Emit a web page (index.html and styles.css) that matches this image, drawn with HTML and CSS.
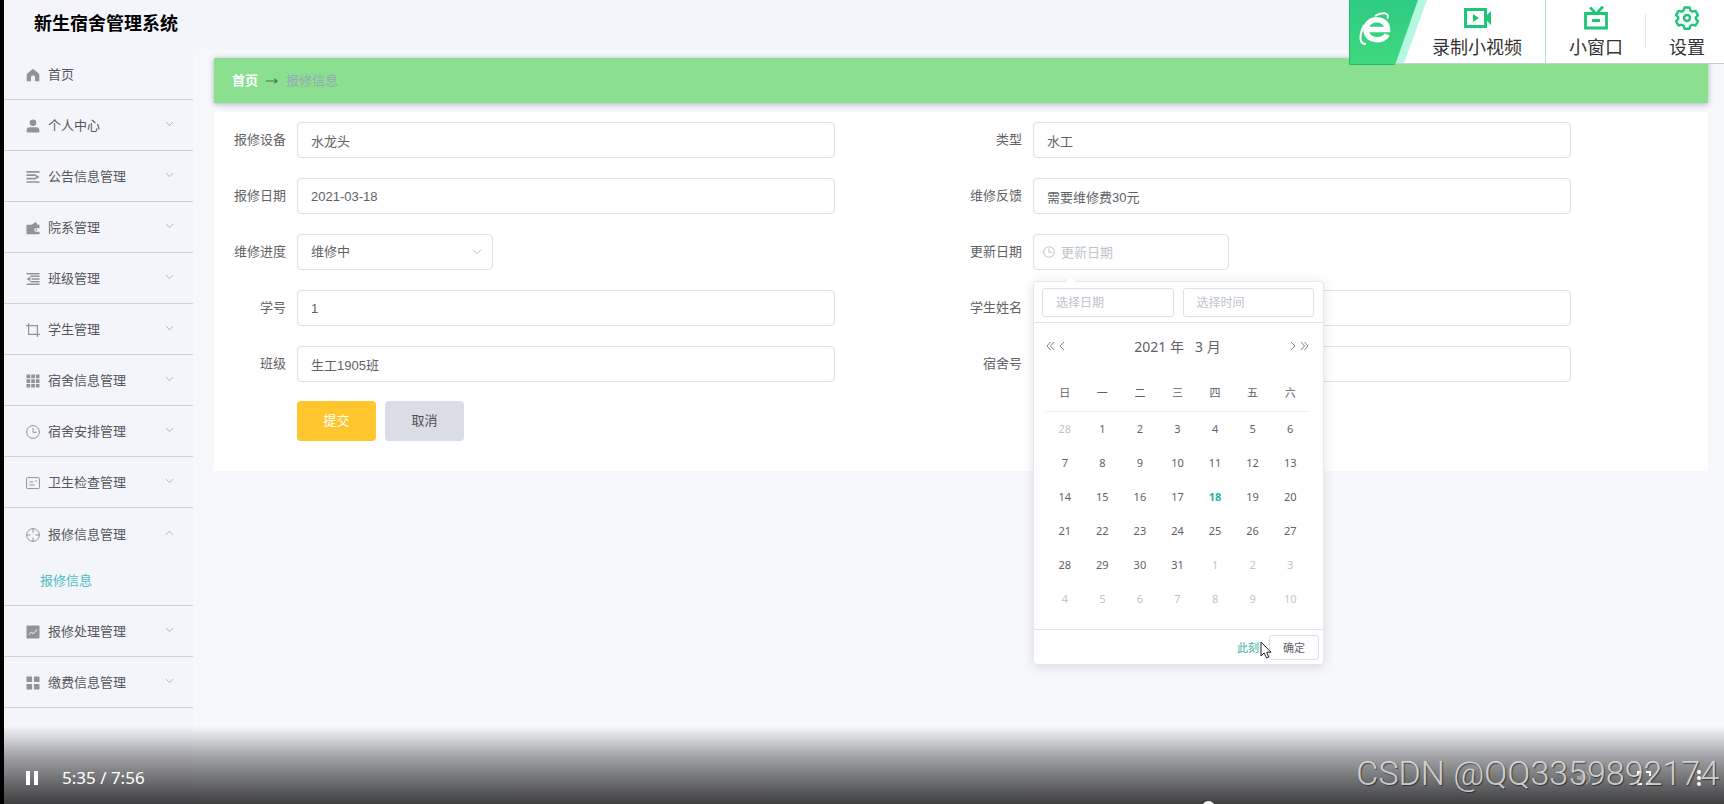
FILE: index.html
```html
<!DOCTYPE html>
<html lang="zh-CN">
<head>
<meta charset="utf-8">
<title>新生宿舍管理系统</title>
<link rel="stylesheet" href="styles.css">
</head>
<body>
<div class="page">
  <header class="header"><h1 class="brand">新生宿舍管理系统</h1></header>
  <div class="body">
    <nav class="sidebar">
      <a class="item" href="#"><svg class="icon" viewBox="0 0 14 14"><path fill="currentColor" d="M7 .8 13.3 6v7.2H9V9.5a2 2 0 0 0-4 0v3.7H.7V6z"/></svg><span class="name">首页</span></a>
      <a class="item" href="#"><svg class="icon" viewBox="0 0 14 14"><circle cx="7" cy="3.8" r="3.3" fill="currentColor"/><path fill="currentColor" d="M.7 13.6V11q0-2.8 3-2.8h6.6q3 0 3 2.8v2.6z"/></svg><span class="name">个人中心</span><svg class="chev" viewBox="0 0 10 6"><path d="m1 .8 4 4 4-4"/></svg></a>
      <a class="item" href="#"><svg class="icon" viewBox="0 0 14 14"><path stroke="currentColor" stroke-width="1.7" fill="none" d="M.5 1.800h13M.5 5.200h9M.5 8.600h9M.5 12h13"/><path fill="currentColor" d="m9.500 4.200 4 2.700-4 2.700z"/></svg><span class="name">公告信息管理</span><svg class="chev" viewBox="0 0 10 6"><path d="m1 .8 4 4 4-4"/></svg></a>
      <a class="item" href="#"><svg class="icon" viewBox="0 0 14 14"><path fill="currentColor" fill-rule="evenodd" d="M.5 3.800h5L9.800 1l1.700 2.800h2v3.400H10a1.700 1.700 0 0 0 0 3.600h3.500v2.400H.5zM10.200 8.300a.8.8 0 1 0 .1 0z"/></svg><span class="name">院系管理</span><svg class="chev" viewBox="0 0 10 6"><path d="m1 .8 4 4 4-4"/></svg></a>
      <a class="item" href="#"><svg class="icon" viewBox="0 0 14 14"><path stroke="currentColor" stroke-width="1.600" fill="none" d="M.5 1.800h13M5.500 7h8M.5 12.200h13M4.500 4.300h9M4.500 9.700h9"/><path fill="currentColor" d="M4.300 4.400.6 7l3.700 2.600z"/></svg><span class="name">班级管理</span><svg class="chev" viewBox="0 0 10 6"><path d="m1 .8 4 4 4-4"/></svg></a>
      <a class="item" href="#"><svg class="icon" viewBox="0 0 14 14"><path stroke="currentColor" stroke-width="1.2" fill="none" d="M2.600 0v11.400H14M0 2.600h11.400V14"/></svg><span class="name">学生管理</span><svg class="chev" viewBox="0 0 10 6"><path d="m1 .8 4 4 4-4"/></svg></a>
      <a class="item" href="#"><svg class="icon" viewBox="0 0 14 14"><path fill="currentColor" d="M.5.5h3.700v3.700H.5zM5.200.5h3.700v3.700H5.200zM9.900.5h3.600v3.700H9.900zM.5 5.200h3.700v3.700H.5zM5.200 5.200h3.700v3.700H5.200zM9.900 5.200h3.600v3.700H9.900zM.5 9.900h3.700v3.600H.5zM5.200 9.900h3.700v3.600H5.200zM9.900 9.900h3.600v3.600H9.900z"/></svg><span class="name">宿舍信息管理</span><svg class="chev" viewBox="0 0 10 6"><path d="m1 .8 4 4 4-4"/></svg></a>
      <a class="item" href="#"><svg class="icon" viewBox="0 0 14 14"><g stroke="currentColor" fill="none"><circle cx="7" cy="7" r="6.4"/><path d="M7 3v4.300h3.600"/></g></svg><span class="name">宿舍安排管理</span><svg class="chev" viewBox="0 0 10 6"><path d="m1 .8 4 4 4-4"/></svg></a>
      <a class="item" href="#"><svg class="icon" viewBox="0 0 14 14"><g stroke="currentColor" fill="none"><rect x=".6" y="1.6" width="12.8" height="11" rx=".8"/><path d="M3.300 6h4M3.300 9h5.400M9.300 5h1.800"/></g></svg><span class="name">卫生检查管理</span><svg class="chev" viewBox="0 0 10 6"><path d="m1 .8 4 4 4-4"/></svg></a>
      <div class="group">
        <a class="item open" href="#"><svg class="icon" viewBox="0 0 14 14"><g stroke="currentColor" fill="none"><circle cx="7" cy="7" r="6.4"/><path d="M7 .6v4M7 9.400v4M.6 7h4M9.400 7h4"/></g></svg><span class="name">报修信息管理</span><svg class="chev" viewBox="0 0 10 6"><path d="m1 5 4-4 4 4"/></svg></a>
        <a class="sub" href="#">报修信息</a>
      </div>
      <a class="item" href="#"><svg class="icon" viewBox="0 0 14 14"><rect x=".5" y=".5" width="13" height="13" rx=".6" fill="currentColor"/><path stroke="#f4f5fb" fill="none" d="m3 9.500 2.200-2.400 2 1.600 4-4.300"/></svg><span class="name">报修处理管理</span><svg class="chev" viewBox="0 0 10 6"><path d="m1 .8 4 4 4-4"/></svg></a>
      <a class="item" href="#"><svg class="icon" viewBox="0 0 14 14"><g fill="currentColor"><rect x=".5" y=".5" width="5.6" height="5.6" rx=".6"/><rect x="7.9" y=".5" width="5.6" height="5.6" rx=".6"/><rect x=".5" y="7.9" width="5.6" height="5.6" rx=".6"/><rect x="7.9" y="7.9" width="5.6" height="5.6" rx=".6"/></g></svg><span class="name">缴费信息管理</span><svg class="chev" viewBox="0 0 10 6"><path d="m1 .8 4 4 4-4"/></svg></a>
    </nav>
    <main class="main">
      <div class="crumbs"><a class="home" href="#">首页</a><svg class="arrow" viewBox="0 0 12 8"><path d="M0 4h11M8.400 1.800 11 4 8.400 6.200"/></svg><span>报修信息</span></div>
      <form class="panel">
        <div class="fields">
          <div class="field"><label for="device">报修设备</label><div class="control"><input class="box" id="device" value="水龙头"></div></div>
          <div class="field"><label for="kind">类型</label><div class="control"><input class="box" id="kind" value="水工"></div></div>
          <div class="field"><label for="date">报修日期</label><div class="control"><input class="box" id="date" value="2021-03-18"></div></div>
          <div class="field"><label for="reply">维修反馈</label><div class="control"><input class="box" id="reply" value="需要维修费30元"></div></div>
          <div class="field"><label for="state">维修进度</label><div class="control"><div class="short"><select class="box" id="state"><option>维修中</option></select><svg class="caret" viewBox="0 0 10 6"><path d="m1 .8 4 4 4-4"/></svg></div></div></div>
          <div class="field"><label for="updated">更新日期</label><div class="control"><div class="short">
            <input class="box timed" id="updated" placeholder="更新日期"><svg class="clock" viewBox="0 0 14 14"><circle cx="7" cy="7" r="6.2"/><path d="M7 3v4.300h3.400"/></svg>
            <div class="picker">
              <div class="picker-head"><input class="mini" aria-label="选择日期" placeholder="选择日期"><input class="mini" aria-label="选择时间" placeholder="选择时间"></div>
              <div class="picker-body">
                <div class="month"><button type="button" aria-label="上一年"><svg class="nav2" viewBox="0 0 9 10"><path d="M4.500 1 1 5l3.500 4M8 1 4.500 5 8 9"/></svg></button><button type="button" aria-label="上个月"><svg class="nav1" viewBox="0 0 6 10"><path d="M5 1 1 5l4 4"/></svg></button><span class="title"><span>2021 年</span><span>3 月</span></span><button type="button" aria-label="下个月"><svg class="nav1" viewBox="0 0 6 10"><path d="m1 1 4 4-4 4"/></svg></button><button type="button" aria-label="下一年"><svg class="nav2" viewBox="0 0 9 10"><path d="M1 1l3.500 4L1 9M4.500 1 8 5 4.500 9"/></svg></button></div>
                <table class="days">
                  <thead><tr><th>日</th><th>一</th><th>二</th><th>三</th><th>四</th><th>五</th><th>六</th></tr></thead>
                  <tbody>
                  <tr><td class="off">28</td><td>1</td><td>2</td><td>3</td><td>4</td><td>5</td><td>6</td></tr>
                  <tr><td>7</td><td>8</td><td>9</td><td>10</td><td>11</td><td>12</td><td>13</td></tr>
                  <tr><td>14</td><td>15</td><td>16</td><td>17</td><td class="today">18</td><td>19</td><td>20</td></tr>
                  <tr><td>21</td><td>22</td><td>23</td><td>24</td><td>25</td><td>26</td><td>27</td></tr>
                  <tr><td>28</td><td>29</td><td>30</td><td>31</td><td class="off">1</td><td class="off">2</td><td class="off">3</td></tr>
                  <tr><td class="off">4</td><td class="off">5</td><td class="off">6</td><td class="off">7</td><td class="off">8</td><td class="off">9</td><td class="off">10</td></tr>
                  </tbody>
                </table>
              </div>
              <div class="picker-foot"><button class="now" type="button">此刻</button><button class="ok" type="button">确定</button>
                <svg class="cursor" viewBox="0 0 12 18"><path d="M1 1v14l3.200-3 2.300 5 2.300-1-2.200-4.800H11z"/></svg>
              </div>
            </div>
          </div></div></div>
          <div class="field"><label for="no">学号</label><div class="control"><input class="box" id="no" value="1"></div></div>
          <div class="field"><label for="student">学生姓名</label><div class="control"><input class="box" id="student"></div></div>
          <div class="field"><label for="class">班级</label><div class="control"><input class="box" id="class" value="生工1905班"></div></div>
          <div class="field"><label for="room">宿舍号</label><div class="control"><input class="box" id="room"></div></div>
        </div>
        <div class="actions"><button class="btn submit" type="button">提交</button><button class="btn cancel" type="button">取消</button></div>
      </form>
    </main>
  </div>
</div>

<div class="recorder">
  <svg class="badge" viewBox="0 0 80 65"><defs><linearGradient id="g" x1="0" y1="0" x2="0" y2="1"><stop offset="0" stop-color="#2dcb84"/><stop offset="1" stop-color="#3fd97e"/></linearGradient></defs><path fill="#fff" d="M60 0h20v63H46z"/><path fill="#b5f8e2" d="M69 0h9L55 63h-9z"/><path fill="url(#g)" d="M0 0h69L46 65H0z"/><path d="M.5 0v64.500H46" stroke="#20bd70" fill="none"/><path fill="none" stroke="#fff" stroke-width="5.500" d="M38 34.500c-3 7.500-20 7.500-21-4-.5-14 21-14.500 21.500-1H17"/><path fill="none" stroke="#fff" stroke-width="2" d="M26 16c6-4 15-4 12.500 2.500M15 25c-5 11-5 19 2 19"/></svg>
  <button class="tool wide"><svg class="tool-icon" viewBox="0 0 28 24"><path d="M2.500 3.500h20v17h-20z" fill="none" stroke="#1cc878" stroke-width="3"/><path d="m10 8 6 4-6 4zM24 9l4-4v14l-4-4z" fill="#1cc878"/></svg>录制小视频</button>
  <button class="tool mid"><svg class="tool-icon" viewBox="0 0 28 24"><path d="M3.500 7.500h21v14.500h-21zM10 14.500h8M8 1.500l5 5M21 .5l-5.500 6" fill="none" stroke="#1cc878" stroke-width="2.800"/></svg>小窗口</button>
  <button class="tool last"><svg class="tool-icon" viewBox="0 0 28 24"><path d="M11.500 1.500h5l.9 3 2 1.100 3.100-.7 2.500 4.300L22.800 11.400v1.600l2.200 2.200-2.500 4.300-3.100-.8-2 1.200-.9 2.800h-5l-.9-2.800-2-1.200-3.100.8L3 15.200 5.200 13v-1.600L3 9.200l2.500-4.300 3.100.7 2-1.100z" fill="none" stroke="#1cc878" stroke-width="2.400" stroke-linejoin="round"/><circle cx="14" cy="12" r="3" fill="none" stroke="#1cc878" stroke-width="2.400"/></svg>设置</button>
</div>

<div class="player">
  <button class="pause" aria-label="暂停"><svg viewBox="0 0 12 14"><path fill="#fff" d="M0 0h4v14H0zM8 0h4v14H8z"/></svg></button>
  <span class="time">5:35 / 7:56</span>
  <div class="right-controls">
    <svg class="mute" viewBox="0 0 14 14"><path fill="#fff" d="M0 5h3l4-4v12L3 9H0zM9 4q3 3 0 6zM9 0q9 7 0 14v-2q6-5 0-10z"/></svg>
    <svg class="full" viewBox="0 0 14 14"><path fill="none" stroke="#fff" stroke-width="2" d="M1 5V1h4M9 1h4v4M13 9v4H9M5 13H1V9"/></svg>
    <svg class="more" viewBox="0 0 4 16"><g fill="#fff"><circle cx="2" cy="2" r="2"/><circle cx="2" cy="8" r="2"/><circle cx="2" cy="14" r="2"/></g></svg>
  </div>
  <i class="thumb"></i>
</div>
<div class="watermark">CSDN @QQ3359892174</div>
</body>
</html>
```

FILE: styles.css
```css
* { box-sizing: border-box; }
body {
  margin: 0;
  height: 100vh;
  position: relative;
  overflow: hidden;
  background: #f4f5fb;
  color: #606266;
  font: 13px/20px "Liberation Sans", "Noto Sans CJK SC", sans-serif;
}
a { color: inherit; text-decoration: none; }
button, input, select { font: inherit; color: inherit; }
button { border: 0; padding: 0; background: none; }
svg { display: block; flex: none; }

.page { min-height: 100vh; display: flex; flex-direction: column; border-left: 4px solid #000; }
.header { height: 49px; padding: 9px 30px; }
.brand { margin: 0; font-size: 18px; line-height: 30px; color: #000; font-weight: 700; }
.body { flex: 1; display: flex; }

.sidebar { width: 189px; flex: none; }
.item { display: flex; align-items: center; gap: 8px; height: 51px; padding: 2px 19px 0 22px; border-bottom: 1px solid #cfd0d8; }
.item.open { border-bottom: 0; }
.group { border-bottom: 1px solid #cfd0d8; }
.icon { width: 14px; height: 14px; color: #909399; }
.name { flex: 1; color: #54575d; }
.chev { width: 9px; height: 6px; margin-bottom: 4px; fill: none; stroke: #a8abb2; }
.sub { display: block; height: 46px; padding: 12px 36px 0; color: #4bbfc0; }

.main { flex: 1; min-width: 0; padding: 9px 16px 0 21px; background: #f6f8fc; }
.crumbs { display: flex; align-items: center; gap: 8px; height: 45px; margin-bottom: 9px; padding: 0 18px; background: #8ae08f; color: #97a8be; box-shadow: 0 1px 6px rgba(0, 0, 0, .3); }
.home { color: #fff; font-weight: 700; }
.arrow { width: 12px; height: 8px; fill: none; stroke: #4f6f57; stroke-width: 1.2; }

.panel { background: #fff; padding: 10px 11px 30px; }
.fields { display: grid; grid-template-columns: 1fr 1fr; row-gap: 20px; }
.field { display: flex; align-items: center; }
.field label { width: 72px; padding-right: 11px; text-align: right; white-space: nowrap; }
.control { flex: 1; min-width: 0; }
.box { display: block; width: 81%; height: 36px; padding: 0 13px; border: 1px solid #dfe1e9; border-radius: 4px; background: #fff; outline: 0; }
::placeholder { color: #c0c4cc; opacity: 1; }
.short { position: relative; width: 196px; }
.short .box { width: 100%; }
select.box { appearance: none; }
.caret { position: absolute; right: 11px; top: 15px; width: 10px; height: 6px; fill: none; stroke: #c0c4cc; }
.box.timed { padding-left: 27px; }
.clock { position: absolute; left: 10px; top: 12px; width: 12px; height: 12px; fill: none; stroke: #c0c4cc; stroke-width: 1.2; }
.actions { display: flex; gap: 9px; padding: 19px 0 0 72px; }
.btn { width: 79px; height: 40px; border-radius: 4px; }
.submit { background: #ffc62e; color: #fff; }
.cancel { background: #dadde5; color: #4c4f56; }

.picker { position: absolute; z-index: 2; left: 0; top: 47px; width: 291px; background: #fff; border: 1px solid #e4e7ed; border-radius: 4px; box-shadow: 0 2px 12px rgba(0, 0, 0, .12); font-family: "Noto Sans", "Noto Sans CJK SC", sans-serif; font-size: 11px; }
.picker::before { content: ""; position: absolute; left: 32px; top: -5px; border: solid transparent; border-width: 0 5px 5px; border-bottom-color: #fff; }
.picker-head { display: flex; gap: 9px; padding: 6px 9px 5px 8px; border-bottom: 1px solid #e4e4e8; }
.mini { flex: 1; min-width: 0; height: 29px; padding: 0 13px; border: 1px solid #dfe1e9; border-radius: 3px; font-size: 12px; }
.picker-body { padding: 11px 14px 14px 12px; }
.month { display: flex; align-items: flex-start; gap: 4px; height: 42px; padding-top: 3px; }
.month button { padding-top: 4px; }
.month svg { height: 10px; fill: none; stroke: #808389; stroke-width: 1; }
.nav2 { width: 9px; }
.nav1 { width: 6px; }
.title { flex: 1; display: flex; justify-content: center; gap: 11px; font-size: 14px; }
.days { width: 100%; table-layout: fixed; border-collapse: collapse; text-align: center; }
.days th { height: 35px; padding: 0; font-weight: 400; border-bottom: 1px solid #ebeef5; }
.days td { height: 34px; padding: 2px 0 0; }
.off { color: #c0c4cc; }
.today { color: #1fb5a0; font-weight: 700; }
.picker-foot { position: relative; display: flex; justify-content: flex-end; gap: 10px; padding: 5px 4px 4px; border-top: 1px solid #e4e4e8; }
.now { color: #35b79c; }
.ok { width: 50px; height: 25px; border: 1px solid #dcdfe6; border-radius: 3px; }
.cursor { position: absolute; left: 226px; top: 11px; width: 12px; height: 18px; fill: #fff; stroke: #222; }

.recorder { position: absolute; top: 0; right: 0; z-index: 3; display: flex; height: 64px; width: 375px; background: #fff; border-bottom: 1px solid #c9ccd0; color: #333; font-size: 18px; line-height: 24px; white-space: nowrap; }
.badge { width: 80px; height: 65px; }
.tool { flex: 1; display: flex; flex-direction: column; align-items: center; gap: 6px; padding-top: 6px; }
.tool.wide { flex: none; width: 117px; padding-right: 20px; border-right: 1px solid #a8e6c8; }
.tool.mid { flex: none; width: 100px; background: linear-gradient(#e2e4e6, #e2e4e6) right 14px / 1px 33px no-repeat; }
.tool.last { padding-left: 4px; }
.tool-icon { width: 28px; height: 24px; }

.player { position: absolute; left: 4px; right: 0; bottom: 0; z-index: 4; height: 78px; display: flex; align-items: center; gap: 24px; padding: 26px 23px 0 22px; background: linear-gradient(rgba(0, 0, 0, 0), rgba(0, 0, 0, .35) 40%, rgba(0, 0, 0, .75)); color: #fff; overflow: hidden; }
.pause svg { width: 12px; height: 14px; }
.time { flex: 1; font: 17px/24px "Noto Sans", sans-serif; }
.right-controls { display: flex; align-items: center; gap: 46px; }
.mute { width: 14px; height: 14px; opacity: .3; }
.full { width: 14px; height: 14px; }
.more { width: 4px; height: 16px; }
.thumb { position: absolute; left: 70%; bottom: -10px; width: 13px; height: 13px; margin-left: -6px; border-radius: 50%; background: #fff; }
.watermark { position: absolute; right: 5px; bottom: 11px; z-index: 5; font: 300 34px/40px Roboto, sans-serif; color: rgba(222, 222, 222, .9); text-shadow: 1px 1px 1px rgba(0, 0, 0, .5); white-space: nowrap; }
```
